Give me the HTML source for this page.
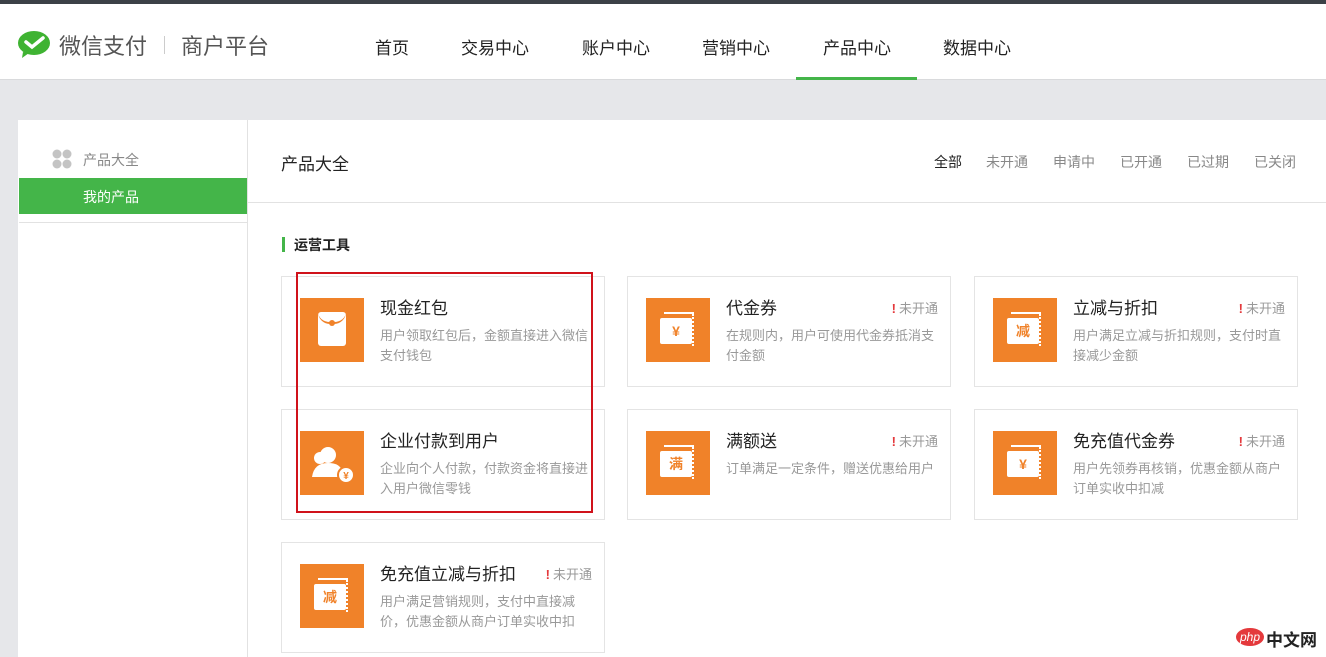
<!DOCTYPE html>
<html><head><meta charset="utf-8"><style>
*{margin:0;padding:0;box-sizing:border-box}
body{width:1326px;height:657px;overflow:hidden;background:#e6e7ea;font-family:"Liberation Sans","Noto Sans CJK SC",sans-serif;position:relative}
.a{position:absolute;white-space:nowrap}
.top{left:0;top:0;width:1326px;height:4px;background:#3c4147}
.hd{left:0;top:4px;width:1326px;height:76px;background:#fff;border-bottom:1px solid #d9dadc}
.nav{top:34px;font-size:17px;color:#222}
.panel{left:18px;top:120px;width:1308px;height:537px;background:#fff}
.side{left:247px;top:120px;width:1px;height:537px;background:#e2e2e2}
.card{position:absolute;width:324px;height:111px;border:1px solid #e4e4e4;background:#fff}
.ic{position:absolute;left:18px;top:21px;width:64px;height:64px;background:#f08229}
.t{position:absolute;left:98px;top:17px;font-size:17px;color:#222}
.d{position:absolute;left:98px;top:49px;width:212px;font-size:13px;line-height:20px;color:#999;white-space:normal}
.s{position:absolute;right:12px;top:21px;font-size:13px;color:#999}
.s b{color:#e4393c;font-weight:bold;margin-right:3px}
.tk{position:absolute;left:14px;top:20px;width:32px;height:26px;background:#fff;border-radius:2px;color:#f08229;font-weight:bold;font-size:14px;text-align:center;line-height:26px}
.tk2{position:absolute;left:18px;top:14px;width:30px;height:4px;border-top:2px solid #fff;border-right:2px solid #fff}
.zz{position:absolute;left:46px;top:16px;width:4px;height:32px;border-left:2px dotted #fff}
</style></head><body>
<div class="a top"></div>
<div class="a hd"></div>
<svg class="a" style="left:18px;top:31px" width="34" height="28" viewBox="0 0 34 28"><ellipse cx="16" cy="12" rx="16" ry="12" fill="#3fb332"/><path d="M5 21 L4 27 L11 22Z" fill="#3fb332"/><path d="M8 11 L14 16 L25 7" stroke="#fff" stroke-width="3.5" fill="none" stroke-linecap="round"/></svg>
<div class="a" style="left:59px;top:29px;font-size:22px;color:#555">微信支付</div>
<div class="a" style="left:164px;top:36px;width:1px;height:18px;background:#ccc"></div>
<div class="a" style="left:181px;top:29px;font-size:22px;color:#555">商户平台</div>
<div class="a nav" style="left:375px">首页</div>
<div class="a nav" style="left:461px">交易中心</div>
<div class="a nav" style="left:582px">账户中心</div>
<div class="a nav" style="left:702px">营销中心</div>
<div class="a nav" style="left:823px">产品中心</div>
<div class="a nav" style="left:943px">数据中心</div>
<div class="a" style="left:796px;top:77px;width:121px;height:3px;background:#44b549"></div>
<div class="a panel"></div>
<div class="a side"></div>
<svg class="a" style="left:52px;top:149px" width="20" height="20"><circle cx="5" cy="5" r="4.5" fill="#c4c4c4"/><circle cx="15" cy="5" r="4.5" fill="#c4c4c4"/><circle cx="5" cy="15" r="4.5" fill="#c4c4c4"/><circle cx="15" cy="15" r="4.5" fill="#c4c4c4"/></svg>
<div class="a" style="left:83px;top:150px;font-size:14px;color:#888">产品大全</div>
<div class="a" style="left:19px;top:178px;width:228px;height:36px;background:#44b549"></div>
<div class="a" style="left:83px;top:187px;font-size:14px;color:#fff">我的产品</div>
<div class="a" style="left:19px;top:222px;width:228px;height:1px;background:#e2e2e2"></div>
<div class="a" style="left:281px;top:150px;font-size:17px;color:#222">产品大全</div>
<div class="a" style="left:934px;top:152px;font-size:14px;color:#222">全部</div>
<div class="a" style="left:986px;top:152px;font-size:14px;color:#888">未开通</div>
<div class="a" style="left:1053px;top:152px;font-size:14px;color:#888">申请中</div>
<div class="a" style="left:1120px;top:152px;font-size:14px;color:#888">已开通</div>
<div class="a" style="left:1187px;top:152px;font-size:14px;color:#888">已过期</div>
<div class="a" style="left:1254px;top:152px;font-size:14px;color:#888">已关闭</div>
<div class="a" style="left:248px;top:202px;width:1078px;height:1px;background:#e2e2e2"></div>
<div class="a" style="left:282px;top:237px;width:3px;height:15px;background:#44b549"></div>
<div class="a" style="left:294px;top:235px;font-size:14px;font-weight:bold;color:#222">运营工具</div>

<div class="card" style="left:281px;top:276px"><div class="ic"><div style="position:absolute;left:18px;top:14px;width:28px;height:34px;background:#fff;border-radius:3px"></div><div style="position:absolute;left:18px;top:14px;width:28px;height:12px;border-bottom:2px solid #f08229;border-radius:0 0 14px 14px"></div><div style="position:absolute;left:29px;top:22px;width:6px;height:6px;border-radius:3px;background:#f08229"></div></div><div class="t">现金红包</div><div class="d">用户领取红包后，金额直接进入微信支付钱包</div></div>
<div class="card" style="left:627px;top:276px"><div class="ic"><div class="tk2"></div><div class="tk">¥</div><div class="zz"></div></div><div class="t">代金券</div><div class="s"><b>!</b>未开通</div><div class="d">在规则内，用户可使用代金券抵消支付金额</div></div>
<div class="card" style="left:974px;top:276px"><div class="ic"><div class="tk2"></div><div class="tk">减</div><div class="zz"></div></div><div class="t">立减与折扣</div><div class="s"><b>!</b>未开通</div><div class="d">用户满足立减与折扣规则，支付时直接减少金额</div></div>
<div class="card" style="left:281px;top:409px"><div class="ic"><svg width="64" height="64"><circle cx="28" cy="24" r="8" fill="#fff"/><path d="M12 46 Q14 32 28 32 Q40 32 42 40 L42 46Z" fill="#fff"/><circle cx="20" cy="27" r="6" fill="#fff"/><circle cx="46" cy="44" r="8" fill="#fff" stroke="#f08229" stroke-width="2"/><text x="46" y="48" font-size="10" fill="#f08229" text-anchor="middle" font-weight="bold">¥</text></svg></div><div class="t">企业付款到用户</div><div class="d">企业向个人付款，付款资金将直接进入用户微信零钱</div></div>
<div class="card" style="left:627px;top:409px"><div class="ic"><div class="tk2"></div><div class="tk">满</div><div class="zz"></div></div><div class="t">满额送</div><div class="s"><b>!</b>未开通</div><div class="d">订单满足一定条件，赠送优惠给用户</div></div>
<div class="card" style="left:974px;top:409px"><div class="ic"><div class="tk2"></div><div class="tk">¥</div><div class="zz"></div></div><div class="t">免充值代金券</div><div class="s"><b>!</b>未开通</div><div class="d">用户先领券再核销，优惠金额从商户订单实收中扣减</div></div>
<div class="card" style="left:281px;top:542px"><div class="ic"><div class="tk2"></div><div class="tk">减</div><div class="zz"></div></div><div class="t">免充值立减与折扣</div><div class="s"><b>!</b>未开通</div><div class="d">用户满足营销规则，支付中直接减价，优惠金额从商户订单实收中扣</div></div>

<div class="a" style="left:296px;top:272px;width:297px;height:241px;border:2px solid #d0121b"></div>
<div class="a" style="left:1236px;top:628px;width:28px;height:18px;border-radius:50%;background:#e4393c;color:#fff;font-size:12px;font-style:italic;text-align:center;line-height:18px">php</div>
<div class="a" style="left:1266px;top:626px;font-size:17px;color:#222;font-weight:bold">中文网</div>
</body></html>
